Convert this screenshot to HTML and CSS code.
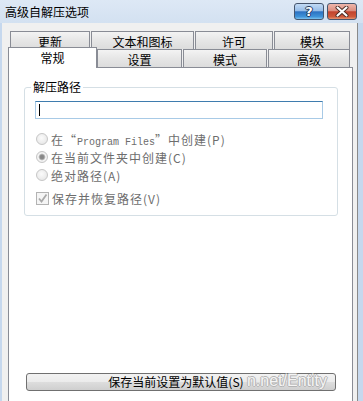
FILE: index.html
```html
<!DOCTYPE html>
<html lang="zh-CN">
<head>
<meta charset="utf-8">
<title>高级自解压选项</title>
<link rel="stylesheet" href="styles.css">
</head>
<body>
<div class="window">
  <div class="titlebar">
    <span class="title">高级自解压选项</span>
    <div class="caption-btns">
      <div class="cbtn help"><span class="qmark">?</span></div>
      <div class="cbtn close">
        <svg width="14" height="11" viewBox="0 0 14 11">
          <path d="M2.5 1.5 L11.5 9.5 M11.5 1.5 L2.5 9.5" stroke="#4a2a22" stroke-width="4" stroke-linecap="round"/>
          <path d="M2.5 1.5 L11.5 9.5 M11.5 1.5 L2.5 9.5" stroke="#ffffff" stroke-width="2.2" stroke-linecap="round"/>
        </svg>
      </div>
    </div>
  </div>
  <div class="client">
    <div class="tabrow back">
      <div class="tab w80">更新</div>
      <div class="tab w103">文本和图标</div>
      <div class="tab w78">许可</div>
      <div class="tab w76">模块</div>
    </div>
    <div class="tabrow front">
      <div class="tab sel">常规</div>
      <div class="tab w85">设置</div>
      <div class="tab w84 gap">模式</div>
      <div class="tab w82 gap">高级</div>
    </div>
    <div class="panel">
      <fieldset class="group">
        <legend>解压路径</legend>
        <div class="pathbox"><span class="caret"></span></div>
        <div class="opts">
          <div class="opt"><span class="radio"></span><span>在“<span class="mono">Program Files</span>”中创建(P)</span></div>
          <div class="opt"><span class="radio on"></span><span>在当前文件夹中创建(C)</span></div>
          <div class="opt"><span class="radio"></span><span>绝对路径(A)</span></div>
          <div class="opt chk"><span class="check"><svg width="11" height="11" viewBox="0 0 11 11"><path d="M2 5.5 L4.5 8.5 L9.5 1.5" fill="none" stroke="#a9a9a9" stroke-width="1.8"/></svg></span><span>保存并恢复路径(V)</span></div>
        </div>
      </fieldset>
      <div class="savebtn">保存当前设置为默认值(S)</div>
      <span class="watermark">n.net/Entity</span>
    </div>
  </div>
</div>
</body>
</html>
```
FILE: styles.css
```css
html, body {
  margin: 0;
  padding: 0;
}
body {
  width: 363px;
  height: 401px;
  overflow: hidden;
  background: #c6d8ee;
  font-family: "Noto Sans CJK SC", "Liberation Sans", sans-serif;
  font-size: 12px;
  color: #000;
}
.window {
  display: flex;
  flex-direction: column;
  height: 401px;
}
.titlebar {
  height: 23px;
  flex: none;
  display: flex;
  align-items: flex-start;
  background: linear-gradient(#dde8f5, #d3e1f1);
}
.title {
  flex: 1;
  margin: 3px 0 0 5px;
  line-height: 17px;
  font-size: 12px;
}
.caption-btns {
  display: flex;
  gap: 3px;
  margin: 3px 6px 0 0;
}
.cbtn {
  width: 30px;
  height: 17px;
  box-sizing: border-box;
  border: 1px solid #46566e;
  border-radius: 3px;
  display: flex;
  align-items: center;
  justify-content: center;
}
.help {
  background: linear-gradient(#c3dbf5 0%, #97bde8 45%, #2c72c2 52%, #3f93d9 85%, #7fc3ef 100%);
}
.close {
  background: linear-gradient(#eeb6ab 0%, #dc8e7f 45%, #c2432d 52%, #cf5a3b 85%, #e59572 100%);
}
.qmark {
  font-family: "DejaVu Sans", sans-serif;
  font-weight: bold;
  font-size: 13px;
  line-height: 13px;
  color: #fff;
  text-shadow: 1px 0 0 #233a5e, -1px 0 0 #233a5e, 0 1px 0 #233a5e, 0 -1px 0 #233a5e;
}
.client {
  flex: 1;
  margin: 0 5px 0 2px;
  background: #f0f0f0;
  border-right: 1px solid #8a8a8a;
  padding-top: 8px;
  overflow: hidden;
}
.tabrow {
  display: flex;
  height: 18px;
}
.tabrow.back {
  padding-left: 8px;
  gap: 1px;
}
.tabrow.front {
  padding-left: 6px;
}
.tab {
  box-sizing: border-box;
  height: 18px;
  border: 1px solid #898c95;
  border-bottom: none;
  background: linear-gradient(#f3f3f3, #e6e6e6 50%, #dcdcdc);
  display: flex;
  justify-content: center;
  align-items: center;
  padding-top: 2px;
  line-height: 14px;
  flex: none;
}
.w80 { width: 80px; }
.w103 { width: 103px; }
.w78 { width: 78px; }
.w76 { width: 76px; }
.w85 { width: 85px; }
.w84 { width: 84px; }
.w82 { width: 82px; }
.gap { margin-left: 1px; }
.tab.sel {
  width: 89px;
  height: 21px;
  margin-top: -2px;
  padding-top: 0;
  background: #fff;
  position: relative;
  z-index: 1;
  align-items: center;
}
.panel {
  position: relative;
  margin-left: 6px;
  width: 345px;
  height: 345px;
  box-sizing: border-box;
  background: #fff;
  border: 1px solid #898c95;
  display: flex;
  flex-direction: column;
  align-items: flex-start;
}
.group {
  margin: 12px 0 0 15px;
  width: 314px;
  box-sizing: border-box;
  border: 1px solid #d5dfe5;
  border-radius: 3px;
  padding: 0 0 8px 0;
  min-width: 0;
}
.group legend {
  margin-left: 6px;
  padding: 0 2px;
  line-height: 14px;
  font-size: 12px;
}
.pathbox {
  margin: 7px 0 0 10px;
  width: 288px;
  height: 18px;
  box-sizing: border-box;
  border: 1px solid #a8cae6;
  border-top-color: #3f7cae;
  padding: 2px 3px;
}
.caret {
  display: block;
  width: 1px;
  height: 12px;
  background: #000;
}
.opts {
  margin: 11px 0 0 11px;
}
.opt {
  display: flex;
  align-items: center;
  height: 18px;
  gap: 3px;
  color: #6d6d6d;
  letter-spacing: 1px;
  white-space: nowrap;
}
.opt.chk {
  margin-top: 5px;
}
.mono {
  font-family: "Liberation Mono", monospace;
  font-size: 10px;
  letter-spacing: 0;
}
.radio {
  width: 12px;
  height: 12px;
  flex: none;
  box-sizing: border-box;
  border-radius: 50%;
  border: 1px solid #c6c6c6;
  background: radial-gradient(circle at 45% 40%, #fbfbfb, #e2e2e2);
}
.radio.on {
  background: radial-gradient(circle, #858585 0, #8c8c8c 2px, #c4c4c4 3px, #f6f6f6 3.8px, #e2e2e2 100%);
}
.check {
  width: 13px;
  height: 13px;
  flex: none;
  box-sizing: border-box;
  border: 1px solid #b3b3b3;
  background: #f5f5f5;
  display: flex;
  align-items: center;
  justify-content: center;
}
.savebtn {
  margin: 157px 0 0 17px;
  width: 310px;
  height: 18px;
  box-sizing: border-box;
  border: 1px solid #707070;
  border-radius: 3px;
  background: linear-gradient(#f2f2f2 0%, #ebebeb 50%, #dddddd 51%, #cfcfcf 100%);
  display: flex;
  align-items: center;
  justify-content: center;
  padding-right: 10px;
  line-height: 14px;
}
.watermark {
  position: absolute;
  right: 25px;
  top: 304px;
  font-family: "Liberation Sans", sans-serif;
  font-size: 16px;
  line-height: 18px;
  color: #f4f4f4;
  text-shadow: 1px 0 0 #b4b4b4, -1px 0 0 #b4b4b4, 0 1px 0 #b4b4b4, 0 -1px 0 #b4b4b4;
}
```
